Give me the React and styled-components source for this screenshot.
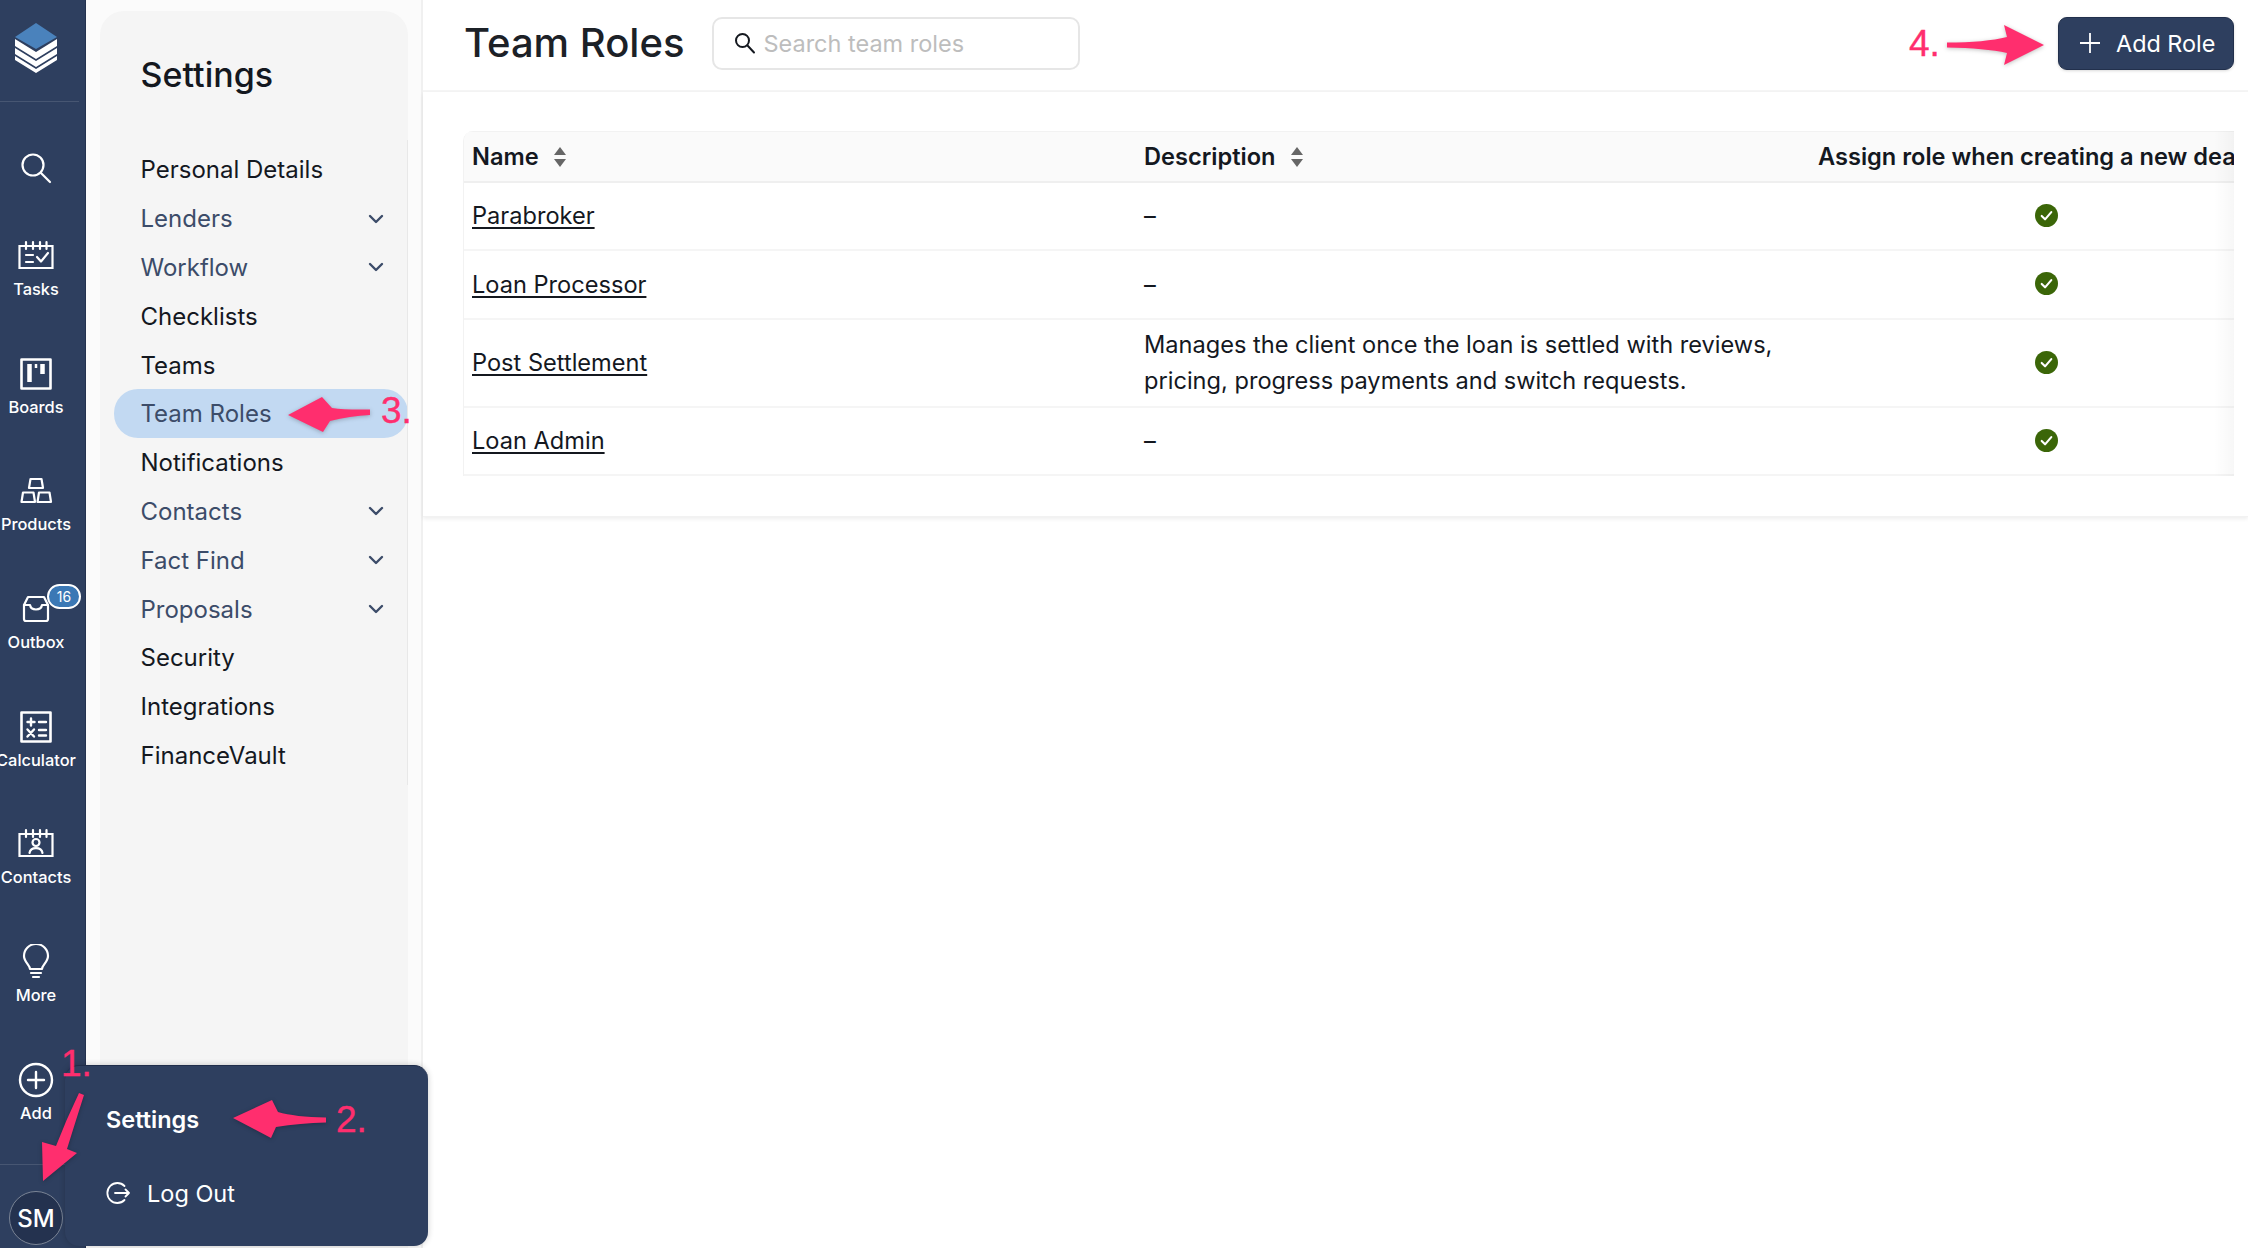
import React from "react";
import styled, { createGlobalStyle } from "styled-components";

const Global = createGlobalStyle`
  html, body { margin: 0; padding: 0; height: 100%; overflow: hidden; background: #fff; }
  * { box-sizing: border-box; }
  body { font-family: Inter, "Liberation Sans", sans-serif; color: #14181f; }
`;

const Page = styled.div`
  position: relative;
  display: flex;
  width: 100vw;
  height: 100vh;
  overflow: hidden;
`;

const Rail = styled.nav`
  flex: 0 0 86px;
  display: flex;
  flex-direction: column;
  background: #2e3f5f;
  color: #fff;
  border-right: 1px solid #24324f;
`;
const LogoBlock = styled.div`
  height: 102px;
  margin-right: 6px;
  border-bottom: 1px solid #475672;
  padding: 22px 0 0 15px;
  margin-bottom: 48px;
`;
const RailItem = styled.div`
  position: relative;
  width: 72px;
  height: ${(p) => p.$h || 117.7}px;
  display: flex;
  flex-direction: column;
  align-items: center;
  flex: none;
`;
const RailIcon = styled.div`
  height: 36px;
  display: flex;
  align-items: center;
  justify-content: center;
`;
const RailLabel = styled.div`
  margin-top: 5px;
  font-size: 16.4px;
  line-height: 21px;
  font-weight: 500;
  white-space: nowrap;
`;
const Badge = styled.div`
  position: absolute;
  left: 47px;
  top: -7px;
  width: 34px;
  height: 25px;
  border-radius: 13px;
  background: #3b78b5;
  border: 2px solid #fff;
  font-size: 14px;
  line-height: 21px;
  text-align: center;
`;
const RailFooter = styled.div`
  position: relative;
  padding: 27px 0 0 9px;
  flex: none;
  &::before {
    content: "";
    position: absolute;
    left: 0;
    top: 0;
    width: 70px;
    height: 1px;
    background: #475672;
  }
`;
const Avatar = styled.div`
  width: 54px;
  height: 54px;
  border-radius: 50%;
  background: #24324f;
  border: 1px solid #7a8495;
  display: flex;
  align-items: center;
  justify-content: center;
  padding-top: 2px;
  font-size: 24px;
  font-weight: 500;
`;

const SideColumn = styled.aside`
  flex: 0 0 337px;
  background: #fbfbfb;
  border-right: 2px solid #f0f0f0;
  padding: 11px 0 0 14px;
`;
const SidePanel = styled.div`
  position: relative;
  width: 308px;
  height: 1237px;
  background: #f5f5f5;
  border-radius: 24px 24px 0 0;
  padding-top: 42px;
  &::after {
    content: "";
    position: absolute;
    right: 0;
    top: 129px;
    width: 1px;
    height: 645px;
    background: #e8e8e8;
  }
`;
const SideTitle = styled.h2`
  margin: 0 0 48.5px 40.5px;
  font-size: 34px;
  line-height: 44px;
  font-weight: 500;
  color: #14181f;
`;
const SideItem = styled.div`
  height: 48.8px;
  margin-left: 14px;
  padding: 0 24px 0 26.5px;
  display: flex;
  align-items: center;
  justify-content: space-between;
  font-size: 24px;
  font-weight: 400;
  color: ${(p) => (p.$sub || p.$active ? "#3c4c69" : "#14181f")};
  background: ${(p) => (p.$active ? "#c2d9f2" : "transparent")};
  border-radius: 24px;
`;

const Main = styled.main`
  flex: 1;
  min-width: 0;
  display: flex;
  flex-direction: column;
`;
const Header = styled.header`
  height: 92px;
  flex: none;
  display: flex;
  align-items: center;
  padding: 0 14px 4px 41px;
  border-bottom: 2px solid #f5f5f5;
`;
const Title = styled.h1`
  margin: 0 28px 0 0;
  font-size: 40px;
  font-weight: 500;
  line-height: 52px;
  color: #1c2127;
`;
const SearchBox = styled.label`
  width: 368px;
  height: 53px;
  display: flex;
  align-items: center;
  gap: 7px;
  padding-left: 20px;
  border: 2px solid #e6e6e6;
  border-radius: 10px;
`;
const SearchInput = styled.input`
  flex: 1;
  min-width: 0;
  border: 0;
  outline: 0;
  padding: 0;
  background: transparent;
  font: 400 23.5px Inter, sans-serif;
  &::placeholder { color: #bdbdbd; opacity: 1; }
`;
const AddButton = styled.button`
  margin-left: auto;
  width: 176px;
  height: 53px;
  display: flex;
  align-items: center;
  gap: 15px;
  padding: 0 0 0 20px;
  background: #2e3f5f;
  border: 1px solid #22304c;
  border-radius: 9px;
  color: #fff;
  font: 400 23.4px Inter, sans-serif;
  box-shadow: 0 1px 3px rgba(0, 0, 0, 0.15);
`;
const Content = styled.section`
  height: 425px;
  flex: none;
  padding: 39px 14px 0 40px;
  box-shadow: 0 2px 4px rgba(0, 0, 0, 0.07);
  border-bottom: 1px solid #f2f2f2;
`;
const TableWrap = styled.div`
  position: relative;
  overflow: hidden;
  border-left: 1px solid #f2f2f2;
  border-top-left-radius: 10px;
  &::after {
    content: "";
    position: absolute;
    top: 0;
    right: 0;
    bottom: 0;
    width: 20px;
    background: linear-gradient(to right, rgba(0, 0, 0, 0), rgba(0, 0, 0, 0.03));
  }
`;
const Row = styled.div`
  display: grid;
  grid-template-columns: 672px 674px 472px;
  align-items: center;
  height: ${(p) => p.$h}px;
  border-bottom: 2px solid #f5f5f5;
`;
const HeadRow = styled(Row)`
  background: #fafafa;
  border-top: 1px solid #f2f2f2;
  border-bottom: 2px solid #efefef;
`;
const HeadCell = styled.div`
  padding-left: 8px;
  display: flex;
  align-items: center;
  gap: 15px;
  font-size: 23.6px;
  font-weight: 600;
  color: #14181f;
  white-space: nowrap;
`;
const Cell = styled.div`
  padding-left: 8px;
  font-size: 23.6px;
  line-height: 36px;
  color: #14181f;
  white-space: nowrap;
`;
const CheckCell = styled.div`
  display: flex;
  justify-content: center;
  padding-bottom: 2px;
`;
const RoleLink = styled.a`
  color: #14181f;
  text-decoration: underline;
  text-underline-offset: 3px;
`;

const Popup = styled.div`
  position: absolute;
  left: 65px;
  top: 1065px;
  width: 363px;
  height: 181px;
  background: #2e3f5f;
  border-top: 1px solid #1f2d4a;
  border-radius: 14px;
  box-shadow: 0 0 6px rgba(0, 0, 0, 0.2);
  color: #fff;
  padding: 0 0 0 41px;
  font-size: 23.5px;
  display: flex;
  flex-direction: column;
`;
const PopupSettings = styled.div`
  height: 54px;
  margin-top: 26px;
  display: flex;
  align-items: center;
  font-weight: 600;
`;
const PopupLogout = styled.div`
  margin-top: 20px;
  height: 54px;
  display: flex;
  align-items: center;
  gap: 17px;
`;
const Annotations = styled.svg`
  position: absolute;
  inset: 0;
  width: 100%;
  height: 100%;
  pointer-events: none;
  filter: drop-shadow(0 1px 2px rgba(0, 0, 0, 0.25));
`;
const Step = styled.span`
  position: absolute;
  left: ${(p) => p.$x}px;
  top: ${(p) => p.$y}px;
  font-family: "Liberation Sans", sans-serif;
  font-size: 37px;
  line-height: 40px;
  color: #ff2e6e;
  -webkit-text-stroke: 0.4px #ff2e6e;
`;

const I = ({ s = 36, children, sw = 2 }) => (
  <svg width={s} height={s} viewBox="0 0 36 36" fill="none" stroke="#fff" strokeWidth={sw} strokeLinecap="round" strokeLinejoin="round">
    {children}
  </svg>
);

const Logo = () => (
  <svg width="42" height="52" viewBox="0 0 42 52">
    <path d="M21 1 42 15 21 27 0 15Z" fill="#4a82bc" />
    <path d="M0 17 21 30 42 17V24L21 37 0 24Z" fill="#fff" />
    <path d="M0 26 21 39 42 26V32L21 45 0 32Z" fill="#fff" />
    <path d="M0 34 21 47 42 34V38L21 51 0 38Z" fill="#fff" />
  </svg>
);
const Chevron = () => (
  <svg width="16" height="10" viewBox="0 0 16 10" fill="none" stroke="#3c4c69" strokeWidth="2.4" strokeLinecap="round" strokeLinejoin="round">
    <path d="M2 2 8 8 14 2" />
  </svg>
);
const Sort = () => (
  <svg width="12" height="20" viewBox="0 0 12 20" fill="#666">
    <path d="M6 0 12 8H0Z" />
    <path d="M0 12H12L6 20Z" />
  </svg>
);
const Check = () => (
  <svg width="23" height="23" viewBox="0 0 24 24">
    <circle cx="12" cy="12" r="12" fill="#3b6608" />
    <path d="M7 12.5 10.5 16 17 8.5" fill="none" stroke="#fff" strokeWidth="2.2" strokeLinecap="round" strokeLinejoin="round" />
  </svg>
);

const rail = [
  ["Tasks", <I sw={2.2}><path d="M1.5 8H34.5V30H1.5Z" strokeLinejoin="miter" /><path d="M8 4V11M15 4V11M22 4V11M28.5 4V11" /><path d="M8 17H15M8 24H15" /><path d="M19 19 23 23.5 30 15" /></I>],
  ["Boards", <I><path d="M3.5 3.5H32.5V32.5H3.5Z" strokeWidth="2.6" /><path d="M11.5 8V26" strokeWidth="4.5" strokeLinecap="butt" /><path d="M18 8V12" strokeWidth="2.5" strokeLinecap="butt" /><path d="M24.5 8V18" strokeWidth="4.5" strokeLinecap="butt" /></I>],
  ["Products", <I sw={2.2}><path d="M12.5 6H23.5L25 15H11Z" /><path d="M5 19.5H15.5L17 29H3.5Z" /><path d="M21 19.5H31.5L33 29H19.5Z" /></I>],
  ["Outbox", <I sw={2.2}><path d="M6 14 10 6H26L30 14V28A2 2 0 0 1 28 30H8A2 2 0 0 1 6 28Z" /><path d="M6 14H12C13 20 23 20 24 14H30" /></I>],
  ["Calculator", <I><path d="M3.5 3.5H32.5V32.5H3.5Z" strokeWidth="2.6" /><path d="M13 9.5V16.5M9.5 13H16.5M21 13H28M9.5 20.5 16 27.5M16 20.5 9.5 27.5M21 21H28M21 26.5H28" strokeWidth="2.4" /></I>],
  ["Contacts", <I sw={2.2}><path d="M1.5 8H34.5V30H1.5Z" strokeLinejoin="miter" /><path d="M8 4V11M15 4V11M22 4V11M28.5 4V11" /><circle cx="18" cy="16.5" r="3.5" /><path d="M11.5 27C12.5 20.5 23.5 20.5 24.5 27" /></I>],
  ["More", <I sw={2.2}><path d="M12 25C12 21 6 18 6 12A12 12 0 0 1 30 12C30 18 24 21 24 25Z" /><path d="M13 29H23M15 33H21" /></I>],
];

const menu = [
  ["Personal Details"],
  ["Lenders", "sub"],
  ["Workflow", "sub"],
  ["Checklists"],
  ["Teams"],
  ["Team Roles", "active"],
  ["Notifications"],
  ["Contacts", "sub"],
  ["Fact Find", "sub"],
  ["Proposals", "sub"],
  ["Security"],
  ["Integrations"],
  ["FinanceVault"],
];

const roles = [
  { name: "Parabroker", h: 68, desc: "–" },
  { name: "Loan Processor", h: 69, desc: "–" },
  { name: "Post Settlement", h: 88, desc: <>Manages the client once the loan is settled with reviews,<br />pricing, progress payments and switch requests.</> },
  { name: "Loan Admin", h: 68, desc: "–" },
];

export default function App() {
  return (
    <Page>
      <Global />
      <Rail>
        <LogoBlock><Logo /></LogoBlock>
        <RailItem $h={88}>
          <RailIcon>
            <I sw={2.2}><circle cx="15" cy="15" r="10.5" /><path d="M23 23 32 32" /></I>
          </RailIcon>
        </RailItem>
        {rail.map(([label, icon]) => (
          <RailItem key={label}>
            <RailIcon>{icon}</RailIcon>
            <RailLabel>{label}</RailLabel>
            {label === "Outbox" && <Badge>16</Badge>}
          </RailItem>
        ))}
        <RailItem $h={102}>
          <RailIcon>
            <I sw={2.4}><circle cx="18" cy="18" r="16" /><path d="M18 10V26M10 18H26" /></I>
          </RailIcon>
          <RailLabel>Add</RailLabel>
        </RailItem>
        <RailFooter><Avatar>SM</Avatar></RailFooter>
      </Rail>

      <SideColumn>
        <SidePanel>
          <SideTitle>Settings</SideTitle>
          {menu.map(([label, kind]) => (
            <SideItem key={label} $sub={kind === "sub"} $active={kind === "active"}>
              {label}
              {kind === "sub" && <Chevron />}
            </SideItem>
          ))}
        </SidePanel>
      </SideColumn>

      <Main>
        <Header>
          <Title>Team Roles</Title>
          <SearchBox>
            <svg width="22" height="22" viewBox="0 0 22 22" fill="none" stroke="#14181f" strokeWidth="2" strokeLinecap="round">
              <circle cx="8.5" cy="8.5" r="6.5" />
              <path d="M13.5 13.5 20 20.5" />
            </svg>
            <SearchInput placeholder="Search team roles" />
          </SearchBox>
          <AddButton>
            <svg width="22" height="22" viewBox="0 0 22 22" fill="none" stroke="#fff" strokeWidth="1.8">
              <path d="M11 1V21M1 11H21" />
            </svg>
            Add Role
          </AddButton>
        </Header>
        <Content>
          <TableWrap>
            <HeadRow $h={52}>
              <HeadCell>Name <Sort /></HeadCell>
              <HeadCell>Description <Sort /></HeadCell>
              <HeadCell>Assign role when creating a new deal</HeadCell>
            </HeadRow>
            {roles.map((r) => (
              <Row key={r.name} $h={r.h}>
                <Cell><RoleLink>{r.name}</RoleLink></Cell>
                <Cell>{r.desc}</Cell>
                <CheckCell><Check /></CheckCell>
              </Row>
            ))}
          </TableWrap>
        </Content>
      </Main>

      <Popup>
        <PopupSettings>Settings</PopupSettings>
        <PopupLogout>
          <svg width="24" height="24" viewBox="0 0 24 24" fill="none" stroke="#fff" strokeWidth="1.8" strokeLinecap="round" strokeLinejoin="round">
            <path d="M18.5 5A10 10 0 1 0 18.5 19" />
            <path d="M9 12H23M19.5 8.5 23 12 19.5 15.5" />
          </svg>
          Log Out
        </PopupLogout>
      </Popup>

      <Annotations viewBox="0 0 2248 1248">
        <g fill="#ff2e6e">
          <path d="M370 409.5 Q345 410 332 408 L322 397 L288 415 L323 432 L330 421 Q350 416 370 415Z" />
          <path d="M326 1117.5 Q295 1117 278 1112 L272 1100 L233 1118 L271 1138 L276 1127 Q300 1123 326 1122.5Z" />
          <path d="M79 1093 Q66 1120 56 1146 L42 1142 L43 1181 L77 1153 L67 1149 Q76 1120 84 1095Z" />
          <path d="M1947 42.5 Q1985 42.5 2007 37 L2004 25 L2044 45 L2004 65 L2007 53 Q1985 48 1947 47.5Z" />
        </g>
      </Annotations>
      <Step $x={61} $y={1044}>1.</Step>
      <Step $x={336} $y={1100}>2.</Step>
      <Step $x={381} $y={391}>3.</Step>
      <Step $x={1909} $y={24}>4.</Step>
    </Page>
  );
}
